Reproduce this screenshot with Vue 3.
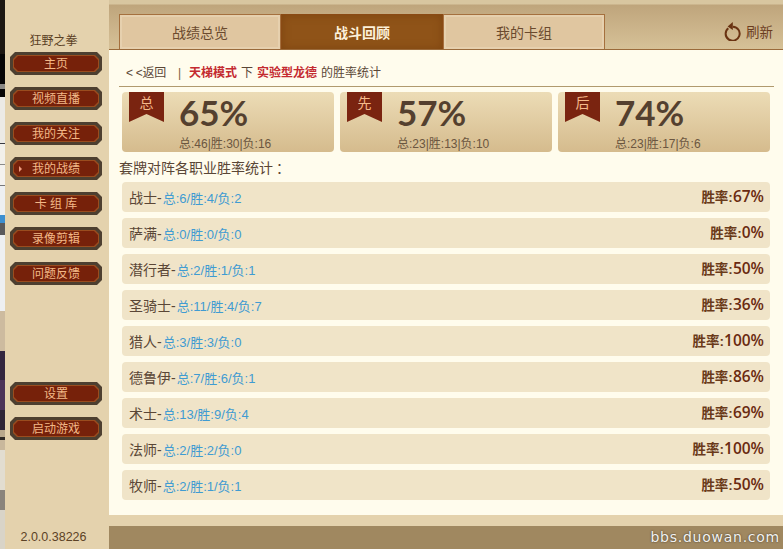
<script setup>
const nav = [
  { t: '主页' }, { t: '视频直播' }, { t: '我的关注' }, { t: '我的战绩', on: true },
  { t: '卡 组 库' }, { t: '录像剪辑' }, { t: '问题反馈' }
]
const nav2 = [{ t: '设置' }, { t: '启动游戏' }]
const cards = [
  { tag: '总', pct: '65%', sub: '总:46|胜:30|负:16' },
  { tag: '先', pct: '57%', sub: '总:23|胜:13|负:10' },
  { tag: '后', pct: '74%', sub: '总:23|胜:17|负:6' }
]
const rows = [
  ['战士', '总:6/胜:4/负:2', '67%'],
  ['萨满', '总:0/胜:0/负:0', '0%'],
  ['潜行者', '总:2/胜:1/负:1', '50%'],
  ['圣骑士', '总:11/胜:4/负:7', '36%'],
  ['猎人', '总:3/胜:3/负:0', '100%'],
  ['德鲁伊', '总:7/胜:6/负:1', '86%'],
  ['术士', '总:13/胜:9/负:4', '69%'],
  ['法师', '总:2/胜:2/负:0', '100%'],
  ['牧师', '总:2/胜:1/负:1', '50%']
]
const strip = [
  ['#1c1712', 55], ['#060505', 30], ['#8a8884', 5], ['#060505', 8], ['#eceae5', 47], ['#3a3a40', 1], ['#f2f0ea', 20],
  ['#8a8a88', 1], ['#f4f2ee', 21], ['#77787a', 1], ['#eef0f2', 29], ['#3d8fd0', 8], ['#5a5a5c', 12], ['#eef0f2', 78],
  ['#cdbb9f', 40], ['#33263f', 30], ['#4c3358', 30], ['#2d2436', 20], ['#b9a98d', 7], ['#2f2a26', 3], ['#c9b89c', 11],
  ['#e2ddd0', 40], ['#8a847c', 20], ['#d9d4c8', 40]
]
</script>

<template>
  <div class="app">
    <div class="strip">
      <div v-for="(s, i) in strip" :key="i" :style="{ background: s[0], height: s[1] + 'px' }"></div>
    </div>
    <aside class="side">
      <div class="user">狂野之拳</div>
      <nav class="nav">
        <div v-for="n in nav" :key="n.t" class="btn">
          <i v-if="n.on" class="dot"></i><span>{{ n.t }}</span>
        </div>
      </nav>
      <nav class="nav nav2">
        <div v-for="n in nav2" :key="n.t" class="btn"><span>{{ n.t }}</span></div>
      </nav>
      <div class="ver">2.0.0.38226</div>
    </aside>
    <main class="main">
      <header class="head">
        <div class="tabs">
          <div class="tab">战绩总览</div>
          <div class="tab active">战斗回顾</div>
          <div class="tab">我的卡组</div>
        </div>
        <div class="refresh">
          <svg width="17" height="19" viewBox="0 0 17 19" fill="none">
            <path d="M4.3 6.2A7 7 0 1 0 9 4.7" stroke="#6a3312" stroke-width="2" />
            <path d="M8.8 0 V8 L3.6 4.4 Z" fill="#6a3312" />
          </svg>
          <span>刷新</span>
        </div>
      </header>
      <section class="panel">
        <div class="crumb">
          <span class="back">&lt; &lt;返回</span>
          <span class="sep">|</span>
          <b class="red">天梯模式</b>
          <span class="w1">下</span>
          <b class="red">实验型龙德</b>
          <span class="w2">的胜率统计</span>
        </div>
        <div class="cards">
          <div v-for="c in cards" :key="c.tag" class="card">
            <div class="ribbon"><span>{{ c.tag }}</span></div>
            <div class="info">
              <div class="pct">{{ c.pct }}</div>
              <div class="sub">{{ c.sub }}</div>
            </div>
          </div>
        </div>
        <div class="title">套牌对阵各职业胜率统计<span class="colon">：</span></div>
        <div class="rows">
          <div v-for="r in rows" :key="r[0]" class="row">
            <div><span class="cls">{{ r[0] }}-</span><span class="stat">{{ r[1] }}</span></div>
            <div class="rate">胜率:<b>{{ r[2] }}</b></div>
          </div>
        </div>
      </section>
      <div class="sand"></div>
      <footer class="foot">bbs.duowan.com</footer>
    </main>
  </div>
</template>

<style>
html, body { margin: 0; padding: 0; background: #3a3030; }
</style>

<style scoped>
.app {
  width: 783px; height: 549px; display: flex; overflow: hidden;
  font-family: "Liberation Sans", "Noto Sans CJK SC", sans-serif; font-size: 13px; color: #5a4636;
}
.strip { width: 5px; flex: none; display: flex; flex-direction: column; overflow: hidden; }
.side {
  width: 104px; flex: none; background: #e4d2ad; display: flex; flex-direction: column; align-items: center;
}
.user { margin-top: 34px; height: 18px; line-height: 14px; color: #5c4226; font-size: 12px; width: 100%; text-align: center; padding-right: 7px; box-sizing: border-box; }
.nav { display: flex; flex-direction: column; gap: 12px; margin-left: -2px; }
.nav2 { margin-top: 97px; }
.btn {
  width: 92px; height: 23px; position: relative; text-align: center; line-height: 24px;
  background: #4d3f30; color: #f3b887; font-size: 12px;
  clip-path: polygon(5px 0, calc(100% - 5px) 0, 100% 5px, 100% calc(100% - 5px), calc(100% - 5px) 100%, 5px 100%, 0 calc(100% - 5px), 0 5px);
}
.btn::before, .btn::after {
  content: ""; position: absolute;
  clip-path: polygon(4px 0, calc(100% - 4px) 0, 100% 4px, 100% calc(100% - 4px), calc(100% - 4px) 100%, 4px 100%, 0 calc(100% - 4px), 0 4px);
}
.btn::before { inset: 3px; background: #9a4c1e; }
.btn::after { inset: 4px; background: #76210a; }
.btn span { position: relative; z-index: 1; }
.dot { position: absolute; z-index: 1; left: 9px; top: 9px; border-left: 3px solid #ef9a7c; border-top: 3px solid transparent; border-bottom: 3px solid transparent; }
.ver { margin-top: auto; height: 24px; line-height: 25px; color: #5c4226; font-size: 12.5px; padding-right: 7px; }
.main { flex: 1; display: flex; flex-direction: column; min-width: 0; background: #e4d2ad; }
.head {
  height: 50px; box-sizing: border-box; flex: none; display: flex; justify-content: space-between; align-items: flex-end;
  padding-left: 10px; border-bottom: 1px solid #9a6a3a;
  background: linear-gradient(#d8c6a0 0, #d8c6a0 4px, #bfa57c 5px, #d6c197 100%);
}
.tabs { display: flex; height: 35px; }
.tab {
  width: 162px; box-sizing: border-box; text-align: center; line-height: 37px; font-size: 14px; color: #6b4a2e;
  background: #e0c6a0; border: 1px solid #a5703e; border-bottom: 0;
  box-shadow: inset 0 0 0 2px #e6d0ae;
}
.tab.active { background: #8f5318; color: #fdf1da; border: 1px solid #8a4a14; border-bottom: 0; box-shadow: inset 0 0 8px #7e4510; font-weight: 700; }
.refresh { display: flex; align-items: center; gap: 5px; height: 36px; padding-right: 10px; color: #6b3c1e; font-size: 13.5px; }
.panel { height: 465px; box-sizing: border-box; flex: none; background: #fffced; padding: 0 10px; overflow: hidden; }
.crumb {
  height: 37px; box-sizing: border-box; margin-right: -1px; padding: 15px 0 0 7px; border-bottom: 1px solid #b09a6e;
  font-size: 12px; line-height: 16px; display: flex; white-space: nowrap; color: #5a4636;
}
.back { width: 48px; letter-spacing: -0.3px; }
.sep { width: 15px; text-indent: 4px; color: #7a5a3a; }
.red { color: #c42a30; }
.w1 { padding: 0 4px; }
.w2 { padding-left: 4px; }
.cards { display: flex; gap: 6px; padding: 5px 3px 0; }
.card {
  width: 212px; height: 60px; box-sizing: border-box; border-radius: 4px; display: flex; padding-left: 7px;
  background: linear-gradient(#ecdcb6, #d5bb8d);
}
.ribbon {
  width: 35px; height: 30px; flex: none; background: #7a2410; color: #f6b98a; text-align: center; font-size: 14px; line-height: 23px;
  clip-path: polygon(0 0, 100% 0, 100% 100%, 50% 73%, 0 100%);
}
.info { margin-left: 15px; }
.pct { font-family: Lato, "Open Sans", sans-serif; font-weight: 700; font-size: 35px; line-height: 41px; height: 44px; color: #54402f; }
.sub { font-size: 12px; line-height: 16px; color: #6b5640; white-space: nowrap; }
.title { height: 22px; line-height: 22px; margin-top: 5px; margin-bottom: 3px; font-size: 14px; color: #5a4636; }
.colon { margin-left: 3px; }
.rows { display: flex; flex-direction: column; gap: 6px; padding: 0 3px; }
.row {
  height: 30px; box-sizing: border-box; border-radius: 4px; background: #f0e4c8; display: flex; justify-content: space-between; align-items: center;
  padding: 0 6px 0 7px;
}
.cls { color: #5a4636; font-size: 14px; }
.stat { color: #3f9bd2; font-size: 13px; margin-left: 1px; }
.rate { color: #6a3a1a; font-size: 13.5px; font-weight: 700; padding-bottom: 2px; }
.rate b { color: #6a2a10; font-size: 15.5px; font-family: "Open Sans", "Liberation Sans", sans-serif; font-weight: 600; }
.sand { height: 11px; flex: none; background: #e4d2ad; }
.foot {
  flex: 1; background: #a08860; color: #f2f2f0; text-align: right; padding-right: 3px; font-size: 14px; line-height: 22px; letter-spacing: 0.75px;
  font-family: "DejaVu Sans", sans-serif; text-shadow: 0 0 2px #3b3022;
}
</style>
